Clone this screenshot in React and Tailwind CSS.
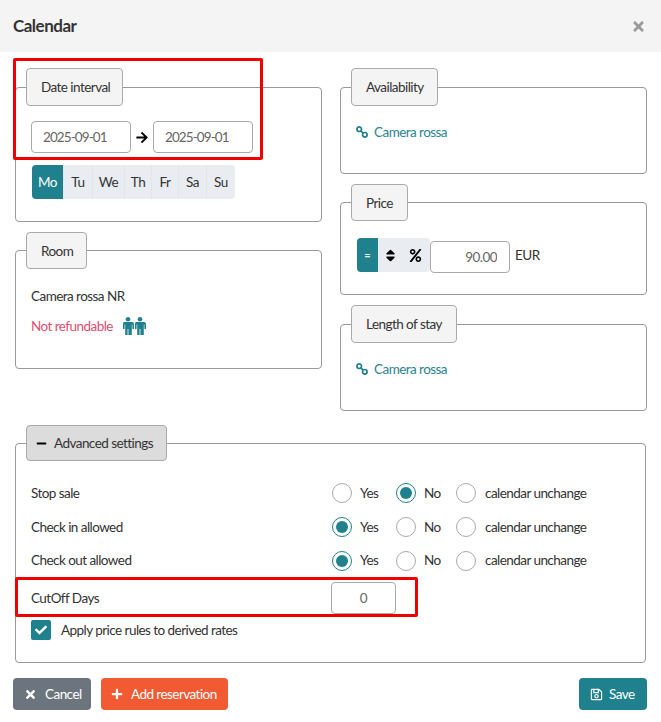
import React from 'react';
import {
  FaTimes, FaArrowRight, FaMinus, FaSort, FaPercent, FaCheck, FaPlus, FaRegSave,
} from 'react-icons/fa';

const font = "font-['Lato',sans-serif]";
const body = 'text-[13.5px] tracking-[-0.55px]';

// legend widths come from the screenshot, the source font is narrower than Lato
const Legend = ({ children, dark, size }) => (
  <legend className={`-ml-[5px] flex items-center gap-[7px] border border-[#aaa] rounded-[4px] text-[#333] ${body} ${size} ${dark ? 'bg-[#dcdcdc]' : 'bg-[#f4f4f4]'}`}>
    {children}
  </legend>
);

const Box = ({ title, size, height, children }) => (
  <fieldset className={`border border-[#999] rounded-[4px] px-[15px] ${height}`}>
    <Legend size={size}>{title}</Legend>
    {children}
  </fieldset>
);

const TextInput = ({ value, width, align }) => (
  <input
    readOnly
    value={value}
    className={`h-[32px] border border-[#aaa] rounded-[4px] bg-white text-[13.5px] text-[#666] outline-none ${width} ${align}`}
  />
);

const LinkIcon = () => (
  <svg width="12" height="12" viewBox="0 0 12 12" fill="none" stroke="#1f818d" strokeWidth="1.7">
    <circle cx="3.2" cy="3.2" r="2.3" />
    <circle cx="8.8" cy="8.8" r="2.3" />
    <path d="M4.6 4.6 7.4 7.4" />
  </svg>
);

const ManIcon = () => (
  <svg width="12" height="18" viewBox="0 0 12 18" fill="#1f818d">
    <circle cx="6" cy="2.3" r="2.3" />
    <path d="M2 5h8q2 0 2 2v4.5q0 .8-.8.8t-.8-.8V7.6h-.6V18H6.4v-6h-.8v6H3.200V7.600h-.6v3.900q0 .8-.8.8T1 11.500V7q0-2 1-2z" />
  </svg>
);

const RoomLink = () => (
  <div className={`flex items-center gap-[6px] text-[#2b8590] ${body}`}>
    <LinkIcon />
    <span>Camera rossa</span>
  </div>
);

const Radio = ({ checked }) => (
  <span className={`w-[20px] h-[20px] rounded-full border flex items-center justify-center bg-white shrink-0 ${checked ? 'border-[#1f818d]' : 'border-[#aaa]'}`}>
    {checked && <span className="w-[12px] h-[12px] rounded-full bg-[#1f818d]" />}
  </span>
);

const RadioRow = ({ label, selected, height }) => (
  <div className={`flex items-center ${height}`}>
    <div className="w-[301px]">{label}</div>
    <div className="w-[64px] flex items-center gap-2">
      <Radio checked={selected === 'yes'} />
      <span>Yes</span>
    </div>
    <div className="w-[60px] flex items-center gap-2">
      <Radio checked={selected === 'no'} />
      <span>No</span>
    </div>
    <div className="flex items-center gap-[9px]">
      <Radio checked={false} />
      <span>calendar unchange</span>
    </div>
  </div>
);

const days = [
  ['Mo', 'w-[31px]'], ['Tu', 'w-[29px]'], ['We', 'w-[32px]'], ['Th', 'w-[27px]'],
  ['Fr', 'w-[27px]'], ['Sa', 'w-[28px]'], ['Su', 'w-[29px]'],
];

export default function App() {
  return (
    <div className={`relative w-[661px] h-[722px] bg-white overflow-hidden text-[#333] ${font}`}>
      <div className="h-[52px] bg-[#f4f4f4] pl-[13px] pr-[15px] flex items-center justify-between">
        <h1 className="text-[17px] font-bold tracking-[-0.5px]">Calendar</h1>
        <FaTimes className="text-[15px] text-[#999]" />
      </div>

      <div className="px-[15px] pt-[16px] grid grid-cols-[307px_307px] gap-x-[18px]">
        <div className="flex flex-col gap-[10px]">
          <Box title="Date interval" size="w-[97px] h-[38px] pl-[14px]" height="h-[154px]">
            <div className="flex items-center mt-[15px]">
              <TextInput value="2025-09-01" width="w-[100px]" align="px-[11px] tracking-[-0.9px]" />
              <FaArrowRight className="mx-[3px] w-[16px] text-[13px] text-black" />
              <TextInput value="2025-09-01" width="w-[100px]" align="px-[11px] tracking-[-0.9px]" />
            </div>
            <div className="flex mt-[12px] ml-px w-fit h-[34px] rounded-[4px] overflow-hidden bg-[#e9edf1] text-[13.5px] tracking-[-0.4px]">
              {days.map(([d, w], i) => (
                <span key={d} className={`${w} flex items-center justify-center ${i === 0 ? 'bg-[#1f818d] text-white' : 'border-l border-[#e2e6ea]'}`}>{d}</span>
              ))}
            </div>
          </Box>
          <Box title="Room" size="w-[61px] h-[37px] pl-[14px] pt-[2px]" height="h-[137px]">
            <div className={`mt-[17px] ${body}`}>Camera rossa NR</div>
            <div className={`mt-[10px] flex items-center gap-[9px] text-[#e0506f] ${body}`}>
              <span>Not refundable</span>
              <span className="flex"><ManIcon /><ManIcon /></span>
            </div>
          </Box>
        </div>

        <div className="flex flex-col gap-[10px]">
          <Box title="Availability" size="w-[87px] h-[38px] pl-[14px]" height="h-[106px]">
            <div className="mt-[16px]"><RoomLink /></div>
          </Box>
          <Box title="Price" size="w-[57px] h-[37px] pl-[14px] pt-[2px]" height="h-[111px]">
            <div className="mt-[17px] ml-px flex items-start">
              <div className="flex h-[34px] w-[73px] rounded-[4px] overflow-hidden bg-[#e9edf1] text-black">
                <span className="w-[21px] bg-[#1f818d] text-white flex items-center justify-center text-[11px] font-bold">=</span>
                <span className="w-[25px] flex items-center justify-center text-[15px]"><FaSort /></span>
                <span className="w-[24px] flex items-center justify-center text-[13px]"><FaPercent /></span>
              </div>
              <div className="mt-[3px]"><TextInput value="90.00" width="w-[80px]" align="px-3 text-right tracking-[-0.55px]" /></div>
              <span className={`ml-[5px] mt-[7px] ${body}`}>EUR</span>
            </div>
          </Box>
          <Box title="Length of stay" size="w-[106px] h-[38px] pl-[14px]" height="h-[106px]">
            <div className="mt-[16px]"><RoomLink /></div>
          </Box>
        </div>
      </div>

      <div className="px-[15px] mt-[14px]">
        <fieldset className="h-[238px] border border-[#999] rounded-[4px] px-[15px]">
          <Legend dark size="w-[141px] h-[36px] pl-[9px]">
            <FaMinus className="text-[11px] text-black" />
            <span>Advanced settings</span>
          </Legend>
          <div className={`mt-[15px] ${body}`}>
            <RadioRow label="Stop sale" selected="no" height="h-[34px]" />
            <RadioRow label="Check in allowed" selected="yes" height="h-[34px]" />
            <RadioRow label="Check out allowed" selected="yes" height="h-[33px]" />
            <div className="flex items-center h-[36px] mt-[3px]">
              <div className="w-[300px]">CutOff Days</div>
              <TextInput value="0" width="w-[65px]" align="text-center" />
            </div>
            <label className="flex items-center gap-[10px] h-[20px] mt-[4px]">
              <span className="w-[20px] h-[20px] rounded-[2px] bg-[#1f818d] flex items-center justify-center text-white text-[12px]"><FaCheck /></span>
              <span>Apply price rules to derived rates</span>
            </label>
          </div>
        </fieldset>
      </div>

      <div className={`pl-[13px] pr-[14px] mt-[15px] flex items-center justify-between text-white ${body}`}>
        <div className="flex gap-[10px]">
          <button className="w-[78px] h-[32px] pl-[11px] rounded-[4px] bg-[#6c757d] flex items-center gap-[8px]">
            <FaTimes className="text-[13px]" /><span>Cancel</span>
          </button>
          <button className="w-[127px] h-[32px] pl-[10px] rounded-[4px] bg-[#f15a32] flex items-center gap-[8px]">
            <FaPlus className="text-[12px]" /><span>Add reservation</span>
          </button>
        </div>
        <button className="w-[68px] h-[32px] pl-[11px] rounded-[4px] bg-[#1f818d] flex items-center gap-[6px]">
          <FaRegSave className="text-[13px]" /><span>Save</span>
        </button>
      </div>

      {/* red annotation boxes drawn over the screenshot */}
      <div className="absolute left-[13px] top-[58px] w-[250px] h-[102px] border-[3px] border-[#f00000] rounded-[2px] pointer-events-none" />
      <div className="absolute left-[15px] top-[577px] w-[403px] h-[40px] border-[3px] border-[#f00000] rounded-[2px] pointer-events-none" />
    </div>
  );
}
